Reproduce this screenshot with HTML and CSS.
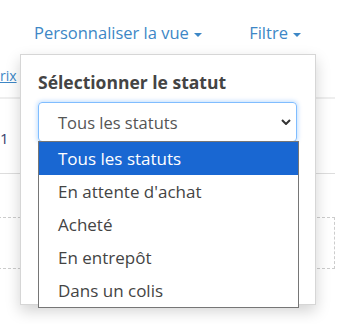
FILE: index.html
```html
<!DOCTYPE html>
<html lang="fr">
<head>
  <meta charset="UTF-8" />
  <meta name="viewport" content="width=device-width, initial-scale=1.0"/>
  <title>Commandes</title>
  <link rel="stylesheet" href="styles.css">
</head>
<body>

  <!-- Barre d'outils -->
  <div class="toolbar">
    <a href="#" class="tool-link">Personnaliser la vue <span class="caret"></span></a>
    <a href="#" class="tool-link">Filtre <span class="caret"></span></a>
  </div>

  <!-- Tableau en arrière-plan -->
  <div class="table">
    <div class="thead-row">
      <a href="#" class="sort-link">rix</a>
    </div>
    <div class="tbody-row">
      <span class="cell-num">1</span>
    </div>
    <div class="empty-box"></div>
  </div>

  <!-- Menu filtre -->
  <div class="filter-menu">
    <h4 class="filter-title">Sélectionner le statut</h4>
    <div class="status-select">
      <span>Tous les statuts</span>
      <svg class="chevron" width="10" height="6" viewBox="0 0 10 6">
        <path d="M1 1 L5 5 L9 1" fill="none" stroke="#333" stroke-width="2"/>
      </svg>
    </div>
  </div>

  <ul class="status-options">
    <li class="selected">Tous les statuts</li>
    <li>En attente d'achat</li>
    <li>Acheté</li>
    <li>En entrepôt</li>
    <li>Dans un colis</li>
  </ul>

</body>
</html>
```

FILE: styles.css
```css
* {
  box-sizing: border-box;
  margin: 0;
  padding: 0;
}

body {
  font-family: 'Open Sans', sans-serif;
  background: #fff;
  color: #444;
  position: relative;
  min-height: 324px;
}

/* Toolbar */
.toolbar {
  display: flex;
  gap: 47px;
  padding: 22px 0 0 34px;
  height: 54px;
}

.tool-link {
  color: #3d87c6;
  font-size: 16.5px;
  line-height: 22px;
  text-decoration: none;
}

.caret {
  display: inline-block;
  width: 0;
  height: 0;
  margin-left: 1px;
  vertical-align: middle;
  border-top: 4px solid #3d87c6;
  border-left: 4px solid transparent;
  border-right: 4px solid transparent;
}

/* Table */
.table {
  width: 335px;
}

.thead-row {
  height: 45px;
  padding-top: 10px;
  border-bottom: 2px solid #eee;
}

.sort-link {
  color: #3d87c6;
  font-size: 14px;
  line-height: 22px;
}

.tbody-row {
  height: 75px;
  padding-top: 28px;
  border-bottom: 1px solid #ddd;
}

.cell-num {
  font-size: 15px;
  line-height: 22px;
  color: #3a3f6b;
}

.empty-box {
  margin: 43px 0 0 -2px;
  height: 52px;
  border: 1px dashed #ccc;
}

/* Filter dropdown */
.filter-menu {
  position: absolute;
  left: 20px;
  top: 54px;
  width: 296px;
  height: 251px;
  background: #fff;
  border: 1px solid #d6d6d6;
  box-shadow: 0 6px 14px rgba(0, 0, 0, 0.18);
  padding: 16px 18px 0 17px;
}

.filter-title {
  font-size: 17.5px;
  font-weight: 700;
  line-height: 22px;
  color: #444;
  margin-bottom: 9px;
}

.status-select {
  display: flex;
  align-items: center;
  justify-content: space-between;
  width: 259px;
  height: 40px;
  padding: 0 5px 0 19px;
  border: 1px solid #80bdff;
  border-radius: 4px;
  box-shadow: 0 0 4px 1px rgba(0, 123, 255, 0.25);
  font-size: 16.5px;
  color: #555;
}

.status-options {
  position: absolute;
  left: 38px;
  top: 141px;
  width: 261px;
  list-style: none;
  background: #fff;
  border: 1px solid #767676;
}

.status-options li {
  height: 33px;
  line-height: 33px;
  padding-left: 19px;
  font-size: 17px;
  color: #444;
}

.status-options .selected {
  background: #1967d2;
  color: #fff;
}
```
